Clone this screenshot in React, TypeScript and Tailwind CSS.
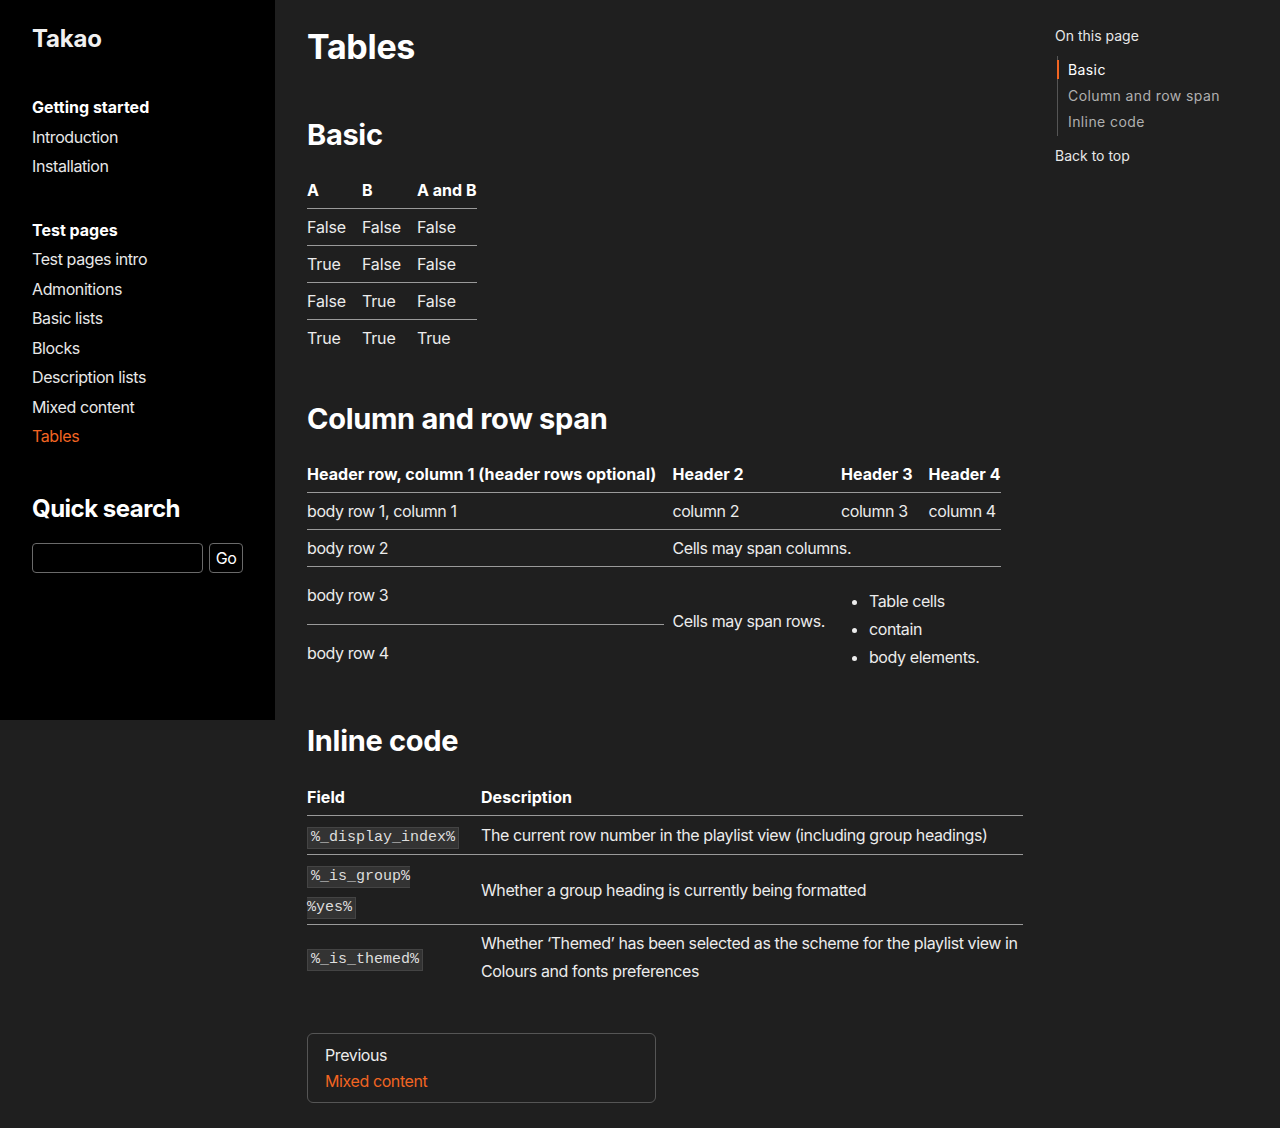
const orange = "text-[#f26522]";

function Sidebar() {
  const getting = ["Introduction", "Installation"];
  const tests = [
    "Test pages intro",
    "Admonitions",
    "Basic lists",
    "Blocks",
    "Description lists",
    "Mixed content",
  ];
  return (
    <aside className="w-[275px] h-[720px] shrink-0 bg-black px-8 pt-[23px]">
      <div className="text-[24px] leading-[32px] font-bold text-[#f0f0f0] tracking-[-0.2px]">Takao</div>
      <nav className="mt-[38px]">
        <div className="text-[16px] leading-[29.5px] font-bold text-white tracking-normal">Getting started</div>
        {getting.map((g) => (
          <div key={g} className="text-[16px] leading-[29.5px] text-[#e8e8e8]">
            {g}
          </div>
        ))}
        <div className="mt-[34px] text-[16px] leading-[29.5px] font-bold text-white tracking-normal">Test pages</div>
        {tests.map((g) => (
          <div key={g} className="text-[16px] leading-[29.5px] text-[#e8e8e8]">
            {g}
          </div>
        ))}
        <div className={`text-[16px] leading-[29.5px] ${orange}`}>Tables</div>
      </nav>
      <div className="mt-[41px] text-[24px] leading-[32px] font-bold text-white tracking-[-0.5px]">Quick search</div>
      <div className="mt-[18px] flex gap-[6px]">
        <input className="w-[171px] h-[30px] rounded-[4px] border border-[#6a6a6a] bg-black text-white px-2 outline-none" />
        <button className="w-[34px] h-[30px] rounded-[4px] border border-[#6a6a6a] bg-black text-[16px] text-white">
          Go
        </button>
      </div>
    </aside>
  );
}

const codeCls =
  "bg-[#333333] border border-[#444444] pt-[1px] pb-[2px] text-[15px] leading-[20px] tracking-normal text-[#dedede] font-['Liberation_Mono','DejaVu_Sans_Mono',monospace]";

function Code({ children }: { children: string }) {
  return <code className={`${codeCls} px-[3px]`}>{children}</code>;
}

const th =
  "text-left font-bold text-white py-1.5 px-2 first:pl-0 last:pr-0 leading-6 tracking-[0.05px] border-b border-[#9a9a9a]";
const td = "py-1.5 px-2 first:pl-0 last:pr-0 leading-6";

function BasicTable() {
  const rows = [
    ["False", "False", "False"],
    ["True", "False", "False"],
    ["False", "True", "False"],
    ["True", "True", "True"],
  ];
  return (
    <table className="mt-[17px] border-collapse">
      <thead>
        <tr>
          <th className={th}>A</th>
          <th className={th}>B</th>
          <th className={th}>A and B</th>
        </tr>
      </thead>
      <tbody>
        {rows.map((r, i) => (
          <tr key={i} className={i < rows.length - 1 ? "border-b border-[#9a9a9a]" : ""}>
            {r.map((c, j) => (
              <td key={j} className={`${td} tracking-[-0.15px]`}>
                {c}
              </td>
            ))}
          </tr>
        ))}
      </tbody>
    </table>
  );
}

function SpanTable() {
  return (
    <table className="mt-[17px] border-collapse">
      <thead>
        <tr>
          <th className={th}>Header row, column 1 (header rows optional)</th>
          <th className={th}>Header 2</th>
          <th className={th}>Header 3</th>
          <th className={th}>Header 4</th>
        </tr>
      </thead>
      <tbody>
        <tr className="border-b border-[#9a9a9a]">
          <td className={td}>body row 1, column 1</td>
          <td className={td}>column 2</td>
          <td className={td}>column 3</td>
          <td className={td}>column 4</td>
        </tr>
        <tr className="border-b border-[#9a9a9a]">
          <td className={td}>body row 2</td>
          <td className={td} colSpan={3}>
            Cells may span columns.
          </td>
        </tr>
        <tr>
          <td className={`${td} border-b border-[#9a9a9a]`}>body row 3</td>
          <td className="pt-1.5 pb-[12px] px-2 leading-6" rowSpan={2}>
            Cells may span rows.
          </td>
          <td className={td} rowSpan={2} colSpan={2}>
            <ul className="list-disc pl-7 mt-[14px] mb-[4px]">
              <li className="leading-7">Table cells</li>
              <li className="leading-7">contain</li>
              <li className="leading-7">body elements.</li>
            </ul>
          </td>
        </tr>
        <tr>
          <td className={td}>body row 4</td>
        </tr>
      </tbody>
    </table>
  );
}

function InlineTable() {
  const tdi = "py-[5px] px-2 first:pl-0 last:pr-0 leading-7 align-middle";
  return (
    <table className="mt-[18px] w-full border-collapse">
      <thead>
        <tr>
          <th className={`${th} w-[166px]`}>Field</th>
          <th className={th}>Description</th>
        </tr>
      </thead>
      <tbody>
        <tr className="border-b border-[#9a9a9a]">
          <td className={tdi}>
            <Code>%_display_index%</Code>
          </td>
          <td className={tdi}>The current row number in the playlist view (including group headings)</td>
        </tr>
        <tr className="border-b border-[#9a9a9a]">
          <td className="pt-[4px] pb-[3px] pr-2 leading-7 align-middle">
            <div className="leading-[31px]">
              <code className={`${codeCls} pl-[3px] pr-0 border-r-0`}>%_is_group%</code>
            </div>
            <div className="leading-[31px]">
              <code className={`${codeCls} pl-0 pr-[3px] border-l-0`}>%yes%</code>
            </div>
          </td>
          <td className={tdi}>Whether a group heading is currently being formatted</td>
        </tr>
        <tr>
          <td className="py-[4px] pr-0 leading-7 align-middle">
            <Code>%_is_themed%</Code>
          </td>
          <td className="py-[4px] px-2 pr-0 leading-7 align-middle">
            Whether ‘Themed’ has been selected as the scheme for the playlist view in Colours and fonts preferences
          </td>
        </tr>
      </tbody>
    </table>
  );
}

function Toc() {
  return (
    <aside className="w-[225px] shrink-0 pt-[26px] text-[14px] tracking-normal">
      <div className="leading-[20px] text-[#e8e8e8]">On this page</div>
      <div className="mt-[10px] ml-[2px] border-l border-[#555] py-[1px]">
        <div className="relative pl-[10px] leading-[26px] text-white tracking-[0.4px]">
          <span className="absolute -left-px top-[3px] h-[19px] w-[2px] bg-[#f26522]" />
          Basic
        </div>
        <div className="pl-[10px] leading-[26px] text-[#b0b0b0] tracking-[0.4px]">Column and row span</div>
        <div className="pl-[10px] leading-[26px] text-[#b0b0b0] tracking-[0.4px]">Inline code</div>
      </div>
      <div className="mt-[10px] leading-[20px] text-[#e8e8e8]">Back to top</div>
    </aside>
  );
}

export default function App() {
  return (
    <div className="min-h-[1128px] bg-[#1f1f1f] text-[#ececec] text-[16px] tracking-[-0.4px] font-['Inter',sans-serif] flex items-start">
      <Sidebar />
      <main className="w-[780px] shrink-0 pl-8 pr-8 pt-[26px] pb-6">
        <h1 className="text-[34px] leading-[42px] font-bold text-white tracking-[-0.3px]">Tables</h1>
        <h2 className="mt-[47px] text-[29px] leading-[40px] font-bold text-white tracking-[-0.3px]">Basic</h2>
        <BasicTable />
        <h2 className="mt-[43px] text-[29px] leading-[40px] font-bold text-white tracking-[-0.3px]">
          Column and row span
        </h2>
        <SpanTable />
        <h2 className="mt-[40px] text-[29px] leading-[40px] font-bold text-white tracking-[-0.3px]">Inline code</h2>
        <InlineTable />
        <div className="mt-[44px] w-[349px] rounded-[6px] border border-[#555] px-[17px] py-[8px]">
          <div className="leading-[26px] text-[#ececec]">Previous</div>
          <div className={`leading-[26px] ${orange}`}>Mixed content</div>
        </div>
      </main>
      <Toc />
    </div>
  );
}
